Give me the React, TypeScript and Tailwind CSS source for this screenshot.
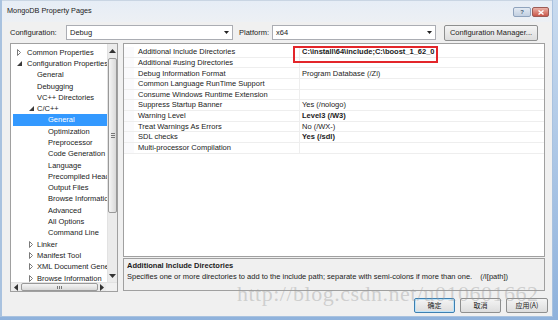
import React from 'react';

type TreeRow = { label: string; arrow?: 'open' | 'closed'; pad: string; box?: string; selected?: boolean };

const tree: TreeRow[] = [
  { label: 'Common Properties', arrow: 'closed', pad: 'pl-[4px]', box: 'w-[10px]' },
  { label: 'Configuration Properties', arrow: 'open', pad: 'pl-[4px]', box: 'w-[10px]' },
  { label: 'General', pad: 'pl-[24px]' },
  { label: 'Debugging', pad: 'pl-[24px]' },
  { label: 'VC++ Directories', pad: 'pl-[24px]' },
  { label: 'C/C++', arrow: 'open', pad: 'pl-[16px]', box: 'w-[8px]' },
  { label: 'General', pad: 'pl-[35px]', selected: true },
  { label: 'Optimization', pad: 'pl-[35px]' },
  { label: 'Preprocessor', pad: 'pl-[35px]' },
  { label: 'Code Generation', pad: 'pl-[35px]' },
  { label: 'Language', pad: 'pl-[35px]' },
  { label: 'Precompiled Headers', pad: 'pl-[35px]' },
  { label: 'Output Files', pad: 'pl-[35px]' },
  { label: 'Browse Information', pad: 'pl-[35px]' },
  { label: 'Advanced', pad: 'pl-[35px]' },
  { label: 'All Options', pad: 'pl-[35px]' },
  { label: 'Command Line', pad: 'pl-[35px]' },
  { label: 'Linker', arrow: 'closed', pad: 'pl-[16px]', box: 'w-[8px]' },
  { label: 'Manifest Tool', arrow: 'closed', pad: 'pl-[16px]', box: 'w-[8px]' },
  { label: 'XML Document Generator', arrow: 'closed', pad: 'pl-[16px]', box: 'w-[8px]' },
  { label: 'Browse Information', arrow: 'closed', pad: 'pl-[16px]', box: 'w-[8px]' },
];

const props: [string, string, boolean][] = [
  ['Additional Include Directories', 'C:\\install\\64\\include;C:\\boost_1_62_0', true],
  ['Additional #using Directories', '', false],
  ['Debug Information Format', 'Program Database (/Zi)', false],
  ['Common Language RunTime Support', '', false],
  ['Consume Windows Runtime Extension', '', false],
  ['Suppress Startup Banner', 'Yes (/nologo)', false],
  ['Warning Level', 'Level3 (/W3)', true],
  ['Treat Warnings As Errors', 'No (/WX-)', false],
  ['SDL checks', 'Yes (/sdl)', true],
  ['Multi-processor Compilation', '', false],
];

const Arrow = ({ open }: { open: boolean }) =>
  open ? (
    <svg width="5" height="5" viewBox="0 0 5 5">
      <polygon points="5,0 5,5 0,5" fill="#3a3a3a" />
    </svg>
  ) : (
    <svg width="4" height="7" viewBox="0 0 4 7">
      <polygon points="0.5,0.5 3.5,3.5 0.5,6.5" fill="none" stroke="#7a7a7a" strokeWidth="1" />
    </svg>
  );

const Caret = ({ dir }: { dir: 'up' | 'down' | 'left' | 'right' }) => {
  const pts = {
    up: '0,4 3.5,0 7,4',
    down: '0,0 3.5,4 7,0',
    left: '4,0 0,3.5 4,7',
    right: '0,0 4,3.5 0,7',
  }[dir];
  const horiz = dir === 'left' || dir === 'right';
  return (
    <svg width={horiz ? 4 : 7} height={horiz ? 7 : 4} viewBox={horiz ? '0 0 4 7' : '0 0 7 4'}>
      <polygon points={pts} fill="#333" />
    </svg>
  );
};

const Dropdown = ({ value, width }: { value: string; width: string }) => (
  <div className={`${width} h-[15px] flex items-center bg-white border border-[#abadb3]`}>
    <span className="flex-1 pl-[3px] leading-none">{value}</span>
    <span className="w-[12px] flex justify-center">
      <svg width="5" height="3" viewBox="0 0 5 3">
        <polygon points="0,0 5,0 2.5,3" fill="#222" />
      </svg>
    </span>
  </div>
);

const WinButton = ({ children, focused, width }: { children: React.ReactNode; focused?: boolean; width: string }) => (
  <div
    className={`${width} h-[15px] flex items-center justify-center rounded-[2px] border bg-gradient-to-b from-[#f4f4f4] to-[#dddddd] ${
      focused ? 'border-[#3c7fb1] shadow-[inset_0_0_0_1px_#bfe4f9]' : 'border-[#8e8f8f]'
    }`}
  >
    {children}
  </div>
);

export default function App() {
  return (
    <div className="relative w-[558px] h-[320px] flex bg-gradient-to-b from-[#c9dbef] to-[#8fb2dc] text-[7.5px] text-[#1b1b1b] font-['Liberation_Sans',sans-serif] overflow-hidden">
      <div className="w-[553px] h-[317px] flex flex-col bg-[#f0f0f0] border-l-2 border-r border-b border-[#a9c2df]">
        {/* title bar */}
        <div className="h-[22px] flex items-center justify-between pl-[5px] pr-[3px] bg-gradient-to-b from-[#e6edf6] to-[#edf0f4] border-t border-[#c9d5e3]">
          <span className="text-[7.3px] text-[#222]">MongoDB Property Pages</span>
          <div className="flex gap-[1px] self-start mt-[6px]">
            <div className="w-[18px] h-[10px] rounded-[2px] border border-[#8fa3bd] bg-gradient-to-b from-[#e3eaf3] to-[#c2d0e1] flex items-center justify-center text-[6px] font-bold text-[#4b5d75] leading-none">
              ?
            </div>
            <div className="w-[17px] h-[10px] rounded-[2px] border border-[#9b5b55] bg-gradient-to-b from-[#eab0a6] to-[#c8574b] flex items-center justify-center">
              <svg width="6" height="5" viewBox="0 0 6 5">
                <path d="M0.5 0.5 L5.5 4.5 M5.5 0.5 L0.5 4.5" stroke="#fff" strokeWidth="1.4" />
              </svg>
            </div>
          </div>
        </div>

        {/* configuration row */}
        <div className="h-[21px] flex items-start pt-[3px] pl-[8px]">
          <span className="w-[56px] h-[15px] flex items-center">Configuration:</span>
          <Dropdown value="Debug" width="w-[167px]" />
          <span className="w-[39px] h-[15px] flex items-center pl-[6px]">Platform:</span>
          <Dropdown value="x64" width="w-[164px]" />
          <div className="ml-[8px] w-[94px] h-[16px] flex items-center justify-center rounded-[2px] border border-[#8e8f8f] bg-gradient-to-b from-[#f4f4f4] to-[#dddddd]">
            Configuration Manager...
          </div>
        </div>

        {/* main */}
        <div className="flex gap-[5px] pl-[8px]">
          {/* tree */}
          <div className="w-[108px] h-[249px] flex flex-col bg-white border border-[#a0a0a0]">
            <div className="flex h-[238px]">
              <div className="flex-1 pl-[2px] pt-[2.6px] overflow-hidden">
                {tree.map((r, i) => (
                  <div
                    key={i}
                    className={`h-[11.3px] flex items-center whitespace-nowrap ${r.pad} ${
                      r.selected ? 'bg-[#3399ff] text-white' : ''
                    }`}
                  >
                    {r.arrow && (
                      <span className={`${r.box} flex items-center shrink-0`}>
                        <Arrow open={r.arrow === 'open'} />
                      </span>
                    )}
                    <span>{r.label}</span>
                  </div>
                ))}
              </div>
              <div className="w-[10px] flex flex-col bg-[#ebebeb] border-l border-[#e2e2e2]">
                <div className="h-[14px] flex items-center justify-center">
                  <Caret dir="up" />
                </div>
                <div className="h-[155px] rounded-[2px] border border-[#999] bg-gradient-to-r from-[#f5f5f5] to-[#d9d9d9] flex items-center justify-center">
                  <div className="flex flex-col gap-[1px]">
                    <div className="w-[4px] h-[1px] bg-[#777]" />
                    <div className="w-[4px] h-[1px] bg-[#777]" />
                    <div className="w-[4px] h-[1px] bg-[#777]" />
                  </div>
                </div>
                <div className="flex-1" />
                <div className="h-[12px] flex items-center justify-center">
                  <Caret dir="down" />
                </div>
              </div>
            </div>
            <div className="flex h-[9px] bg-[#ebebeb] border-t border-[#e2e2e2]">
              <div className="w-[10px] flex items-center justify-center">
                <Caret dir="left" />
              </div>
              <div className="w-[77px] rounded-[2px] border border-[#999] bg-gradient-to-b from-[#f5f5f5] to-[#d9d9d9] flex items-center justify-center gap-[1px]">
                <div className="w-[1px] h-[3px] bg-[#777]" />
                <div className="w-[1px] h-[3px] bg-[#777]" />
                <div className="w-[1px] h-[3px] bg-[#777]" />
              </div>
              <div className="w-[8px] flex items-center justify-center">
                <Caret dir="right" />
              </div>
              <div className="flex-1 bg-[#f0f0f0]" />
            </div>
          </div>

          {/* right column */}
          <div className="w-[422px] flex flex-col gap-[1px]">
            <div className="relative h-[214px] bg-white border border-[#a0a0a0] pt-[3px]">
              {props.map(([name, value, bold], i) => (
                <div key={i} className="h-[10.67px] flex border-b border-[#eeeeee]">
                  <div className="w-[10px] bg-[#fafafc]" />
                  <div className="w-[166px] pl-[4px] flex items-center whitespace-nowrap border-r border-[#eeeeee]">
                    {name}
                  </div>
                  <div className={`flex-1 pl-[2px] flex items-center whitespace-nowrap ${bold ? 'font-bold' : ''}`}>
                    {value}
                  </div>
                </div>
              ))}
              <div className="absolute left-[169px] top-[2px] w-[145px] h-[17px] border-2 border-[#e3262a]" />
            </div>
            <div className="h-[33px] bg-[#f0f0f0] border border-[#a0a0a0] pl-[3px] pt-[1px]">
              <div className="h-[11px] flex items-center font-bold">Additional Include Directories</div>
              <div className="h-[11px] flex items-center whitespace-nowrap">
                <span>Specifies one or more directories to add to the include path; separate with semi-colons if more than one.</span>
                <span className="ml-[8px]">(/I[path])</span>
              </div>
            </div>
          </div>
        </div>

        {/* buttons */}
        <div className="flex justify-end gap-[5px] pt-[6px] pr-[4px] font-['Noto_Sans_CJK_SC',sans-serif] text-[7px]">
          <WinButton width="w-[41px]" focused>
            确定
          </WinButton>
          <WinButton width="w-[41px]">取消</WinButton>
          <WinButton width="w-[42px]">应用(A)</WinButton>
        </div>
      </div>

      {/* watermark */}
      <div className="absolute left-[237px] top-[283px] text-[22px] leading-none tracking-[0.5px] text-[#9a9a9a]/40 font-['Liberation_Serif',serif] whitespace-nowrap pointer-events-none">
        http://blog.csdn.net/u010601662
      </div>
    </div>
  );
}
